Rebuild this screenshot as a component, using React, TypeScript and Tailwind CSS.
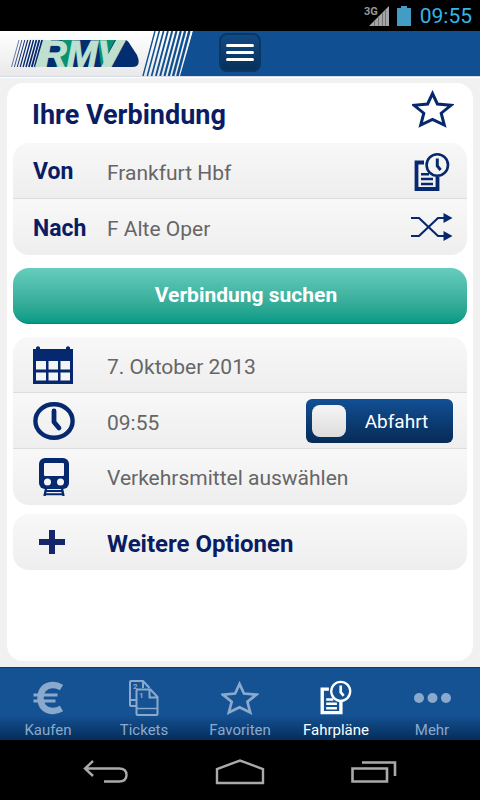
import { useState } from "react";
import type { ReactNode } from "react";

const NAVY = "#06286f";

function StarIcon({ className }: { className: string }) {
  return (
    <svg viewBox="0 0 42 38" className={className} fill="none" stroke="currentColor" strokeWidth="3" aria-hidden="true">
      <path d="M20.5 3.5 L25.4 14 L39 15.3 L29.2 23.2 L32.3 35 L20.5 29.3 L8.7 35 L11.8 23.2 L2 15.3 L15.6 14 Z" />
    </svg>
  );
}

function TimetableIcon({ className }: { className: string }) {
  return (
    <svg viewBox="0 0 36 39" className={className} fill="none" stroke="currentColor" aria-hidden="true">
      <path d="M10 9.5 H2.5 V36 H23.5 V24" strokeWidth="3.8" />
      <path d="M7 21.2 H15 M7 26 H19 M7 31 H19" strokeWidth="2.6" />
      <circle cx="23.3" cy="12" r="10.7" strokeWidth="2.6" />
      <path d="M23.3 5.5 V13 L26.6 17" strokeWidth="3" />
    </svg>
  );
}

function SwapIcon() {
  return (
    <svg viewBox="0 0 43 28" className="w-[43px] h-7" fill="none" stroke={NAVY} strokeWidth="2.2" aria-hidden="true">
      <path d="M1 5 H9 L28 23 H34 M1 23 H9 L28 5 H34" />
      <path d="M33.5 0 L42.5 5 L33.5 10 Z M33.5 18 L42.5 23 L33.5 28 Z" fill={NAVY} stroke="none" />
    </svg>
  );
}

function CalendarIcon() {
  return (
    <svg viewBox="0 0 40 38" className="w-10 h-[38px]" aria-hidden="true">
      <path d="M0 3 H3 V1.5 Q5 -1 7 1.5 V3 H33 V1.5 Q35 -1 37 1.5 V3 H40 V38 H0 Z" fill={NAVY} />
      <path
        d="M3 15 H13 V23.5 H3 Z M15.5 15 H25 V23.5 H15.5 Z M27.5 15 H37 V23.5 H27.5 Z M3 26.5 H13 V34.5 H3 Z M15.5 26.5 H25 V34.5 H15.5 Z M27.5 26.5 H37 V34.5 H27.5 Z"
        fill="#f5f5f5"
      />
    </svg>
  );
}

function ClockIcon() {
  return (
    <svg viewBox="0 0 42 38" className="w-[42px] h-[38px]" fill="none" stroke={NAVY} aria-hidden="true">
      <ellipse cx="21" cy="19" rx="18.6" ry="16.8" strokeWidth="4.4" />
      <path d="M21 9 V20 L26 26" strokeWidth="4.8" strokeLinecap="round" strokeLinejoin="round" />
    </svg>
  );
}

function TrainIcon() {
  return (
    <svg viewBox="0 0 32 38" className="w-8 h-[38px]" aria-hidden="true">
      <rect x="1" y="0" width="30" height="31" rx="6" fill={NAVY} />
      <rect x="6" y="5" width="20" height="13" rx="1" fill="#f5f5f5" />
      <circle cx="9.5" cy="24" r="3.5" fill="#f5f5f5" />
      <circle cx="22.5" cy="24" r="3.5" fill="#f5f5f5" />
      <path d="M8 31 L6.5 38 M24 31 L25.5 38" stroke={NAVY} strokeWidth="2.4" />
      <path d="M8 33 H24 M7 36.2 H25" stroke={NAVY} strokeWidth="2" />
    </svg>
  );
}

function EuroIcon() {
  return (
    <svg viewBox="0 0 30 34" className="w-[30px] h-[34px]" fill="none" stroke="currentColor" aria-hidden="true">
      <path d="M28.5 6.5 Q24 3.8 19.5 4 C11 4.4 7.5 10 7.5 17 C7.5 24 11 29.6 19.5 30 Q24 30.2 28.5 27.5" strokeWidth="6.4" />
      <path d="M0.5 14 H24.5 M0.5 20 H22.5" strokeWidth="3.2" />
    </svg>
  );
}

function TicketsIcon() {
  return (
    <svg viewBox="0 0 30 36" className="w-[30px] h-9" fill="none" stroke="currentColor" strokeWidth="2" aria-hidden="true">
      <path d="M8 26 H2 Q1 26 1 25 V2 Q1 1 2 1 H14 L20.5 8 M14 1 V8 M1 20 H7" />
      <path d="M8.5 9.5 H21.5 L28.5 17 V34 Q28.5 35 27.5 35 H8.5 Q7.5 35 7.5 34 V10.5 Q7.5 9.5 8.5 9.5 Z M20.5 9.5 V17.5 H28" />
      <path d="M7.5 28.5 H28.5" strokeWidth="1.4" />
      <text x="4" y="9" fontSize="8" fontWeight="bold" fontFamily="Roboto, sans-serif" fill="currentColor" stroke="none">2</text>
      <text x="10" y="18" fontSize="8" fontWeight="bold" fontFamily="Roboto, sans-serif" fill="currentColor" stroke="none">1</text>
    </svg>
  );
}

function Logo() {
  return (
    <svg viewBox="0 0 196 45" className="w-[196px] h-[45px] shrink-0" role="img" aria-label="RMV">
      <defs>
        <linearGradient id="logoBg" x1="0" y1="0" x2="0" y2="1">
          <stop offset="0" stopColor="#fff" />
          <stop offset="1" stopColor="#e9e9e9" />
        </linearGradient>
        <clipPath id="logoBody">
          <path d="M43 9 H125 Q127 9 128.5 11 L137 24 Q142 36 132 36 H35 Z" />
        </clipPath>
      </defs>
      <path d="M0 0 H193 L181 45 H0 Z" fill="url(#logoBg)" />
      {[0, 1, 2, 3, 4, 5, 6, 7, 8].map((i) => (
        <path key={i} d={`M${155 + i * 4.3} 0 L${143 + i * 4.3} 45`} stroke="#104f92" strokeWidth={1.4 + i * 0.15} />
      ))}
      <path d="M193 0 H196 V45 H180 Z" fill="#104f92" />
      {[0, 1, 2, 3, 4, 5, 6, 7, 8].map((i) => (
        <path key={i} d={`M${19 + i * 2.9} 9 L${11.5 + i * 2.9} 36`} stroke={NAVY} strokeWidth={0.6 + i * 0.18} />
      ))}
      <g clipPath="url(#logoBody)">
        <path d="M30 0 H150 V45 H30 Z" fill="#022d70" />
        <path d="M42 9 H51 L44 36 H34 Z" fill="#bfe0cf" />
        <path d="M62 9 H74 L68 36 H56 Z M98 9 H115 L101 36 Z" fill="#079273" />
        <text
          x="40"
          y="36"
          fontSize="37"
          fontFamily="'Liberation Sans', Arial, sans-serif"
          fontWeight="bold"
          fontStyle="italic"
          fill="#bfe0cf"
          stroke="#bfe0cf"
          strokeWidth="1"
        >
          RMV
        </text>
        <path d="M116 9 H126 L107 36 H101 Z" fill="#bfe0cf" />
      </g>
    </svg>
  );
}

function Row({ children, last }: { children: ReactNode; last?: boolean }) {
  return (
    <div
      className={`flex items-center h-14 pl-5 pr-[14px] bg-linear-to-b from-[#f8f8f8] to-[#eeeeee] ${
        last ? "" : "border-b border-[#dddddd]"
      }`}
    >
      {children}
    </div>
  );
}

const tabs = [
  { name: "Kaufen", icon: <EuroIcon /> },
  { name: "Tickets", icon: <TicketsIcon /> },
  { name: "Favoriten", icon: <StarIcon className="w-[38px] h-9" /> },
  { name: "Fahrpläne", icon: <TimetableIcon className="w-8 h-9" /> },
  {
    name: "Mehr",
    icon: (
      <svg viewBox="0 0 37 10" className="w-[37px] h-[10px]" fill="currentColor" aria-hidden="true">
        <circle cx="5" cy="5" r="5" />
        <circle cx="18.5" cy="5" r="5" />
        <circle cx="32" cy="5" r="5" />
      </svg>
    ),
  },
];

export default function App() {
  const [from, setFrom] = useState("Frankfurt Hbf");
  const [to, setTo] = useState("F Alte Oper");
  const [departure, setDeparture] = useState(true);
  const [activeTab, setActiveTab] = useState("Fahrpläne");

  const swap = () => {
    setFrom(to);
    setTo(from);
  };

  return (
    <div className="min-h-screen flex flex-col bg-[#f1f1f1] font-[Roboto,sans-serif]">
      {/* Status bar */}
      <div className="h-[31px] bg-black flex items-center justify-end pr-2 text-[#33b5e5]">
        <svg viewBox="0 0 26 22" className="w-[26px] h-[22px]" aria-hidden="true">
          <text x="0" y="10" fontSize="11" fontWeight="bold" fontFamily="Roboto, sans-serif" fill="#999">3G</text>
          <path d="M25 1 V21 H5 Z" fill="#a5a5a5" />
          <path d="M10.5 15 V21 M14.5 11 V21 M18.5 8 V21 M21.5 4 V21" stroke="#666" strokeWidth="0.8" />
        </svg>
        <svg viewBox="0 0 14 20" className="w-[14px] h-5 ml-[7px]" fill="#429cc3" aria-hidden="true">
          <path d="M0 2 H4 V0 H10 V2 H14 V20 H0 Z" />
        </svg>
        <span className="ml-[9px] text-[21px] leading-6">09:55</span>
      </div>

      {/* Header */}
      <header className="flex bg-[#104f92] border-b border-[#d5dce8] shadow-[0_1px_0_#fff]">
        <div className="flex-1 flex min-w-0">
          <Logo />
        </div>
        <button
          aria-label="Menü"
          className="mt-[2px] w-[42px] h-[39px] rounded-lg border-2 border-[#0b3763] bg-linear-to-b from-[#114a86] to-[#083059] flex flex-col items-center justify-center gap-1"
        >
          <span className="w-7 h-[3px] rounded-sm bg-white"></span>
          <span className="w-7 h-[3px] rounded-sm bg-white"></span>
          <span className="w-7 h-[3px] rounded-sm bg-white"></span>
        </button>
        <div className="flex-1"></div>
      </header>

      <main className="flex-1 mx-[7px] mt-[6px] mb-[6px] px-[6px] pb-6 bg-white rounded-2xl text-[21px] text-[#666666]">
        <div className="flex items-center justify-between h-[60px] pl-[19px] pr-[13px] text-[#0a1c63]">
          <h1 className="text-[27px] leading-8 font-bold pt-1">Ihre Verbindung</h1>
          <button aria-label="Als Favorit speichern" className="text-[#06286f] -mt-2">
            <StarIcon className="w-[42px] h-[38px]" />
          </button>
        </div>

        <div className="rounded-2xl overflow-hidden">
          <Row>
            <label htmlFor="from" className="w-[74px] shrink-0 pt-1 text-[23px] font-bold text-[#0a1c63]">
              Von
            </label>
            <input id="from" value={from} onChange={(e) => setFrom(e.target.value)} className="flex-1 min-w-0 pt-[6px] outline-none" />
            <button aria-label="Letzte Haltestellen" className="text-[#06286f] pt-[3px] mr-[3px]">
              <TimetableIcon className="w-9 h-[39px]" />
            </button>
          </Row>
          <Row last>
            <label htmlFor="to" className="w-[74px] shrink-0 pt-1 text-[23px] font-bold text-[#0a1c63]">
              Nach
            </label>
            <input id="to" value={to} onChange={(e) => setTo(e.target.value)} className="flex-1 min-w-0 pt-[6px] outline-none" />
            <button aria-label="Start und Ziel tauschen" onClick={swap}>
              <SwapIcon />
            </button>
          </Row>
        </div>

        <button className="w-full h-14 mt-[13px] rounded-2xl bg-linear-to-b from-[#66cdbd] to-[#009b86] border-b border-[#008a77] pl-3 text-white font-bold text-[21px]">
          Verbindung suchen
        </button>

        <div className="mt-[13px] rounded-2xl overflow-hidden">
          <Row>
            <label htmlFor="date" aria-label="Datum" className="w-[74px] shrink-0">
              <CalendarIcon />
            </label>
            <input id="date" defaultValue="7. Oktober 2013" className="flex-1 min-w-0 pt-[6px] outline-none" />
          </Row>
          <Row>
            <label htmlFor="time" aria-label="Uhrzeit" className="w-[74px] shrink-0">
              <ClockIcon />
            </label>
            <input id="time" defaultValue="09:55" className="flex-1 min-w-0 pt-[6px] outline-none" />
            <button
              role="switch"
              aria-checked={departure}
              onClick={() => setDeparture(!departure)}
              className={`w-[147px] h-11 px-[6px] rounded-md flex items-center bg-linear-to-b from-[#125095] to-[#062b57] text-white text-[19px] ${
                departure ? "" : "flex-row-reverse"
              }`}
            >
              <span className="w-[34px] h-8 rounded-lg bg-linear-to-b from-[#f5f5f5] to-[#dddddd]"></span>
              <span className="flex-1 pt-1">{departure ? "Abfahrt" : "Ankunft"}</span>
            </button>
          </Row>
          <Row last>
            <span className="w-[74px] shrink-0 pl-[5px]">
              <TrainIcon />
            </span>
            <button className="flex-1 text-left pt-1">Verkehrsmittel auswählen</button>
          </Row>
        </div>

        <div className="mt-[9px] rounded-2xl overflow-hidden">
          <Row last>
            <button className="flex-1 flex items-center text-left text-[24px] font-bold text-[#0a1c63]">
              <span className="w-[74px] pl-[6px]">
                <svg viewBox="0 0 26 24" className="w-[26px] h-6" stroke="#14256b" strokeWidth="6" aria-hidden="true">
                  <path d="M13 0 V24 M0 12 H26" />
                </svg>
              </span>
              <span className="pt-1">Weitere Optionen</span>
            </button>
          </Row>
        </div>
      </main>

      {/* Tab bar */}
      <nav className="h-[73px] flex border-t border-[#0d3b6d] bg-linear-to-b from-[#155294] from-65% to-[#052e5b]">
        {tabs.map((tab) => (
          <button
            key={tab.name}
            onClick={() => setActiveTab(tab.name)}
            className={`flex-1 min-w-0 flex flex-col items-center pt-3 ${
              activeTab === tab.name ? "text-white" : "text-[#8ba9cd]"
            }`}
          >
            <span className="h-9 flex items-center justify-center">{tab.icon}</span>
            <span className="mt-1 text-[15px] leading-5">{tab.name}</span>
          </button>
        ))}
      </nav>

      {/* System navigation */}
      <div className="h-[60px] bg-black flex items-center justify-between pt-1 px-[83px] text-[#aaaaaa]">
        <button aria-label="Zurück">
          <svg viewBox="0 0 46 24" className="w-[46px] h-6" fill="none" stroke="currentColor" strokeWidth="2.4" aria-hidden="true">
            <path d="M10 1 L2 8.5 L10 16 M2 8.5 H36 Q43.5 8.5 43.5 15 Q43.5 21.5 36 21.5 H21" />
          </svg>
        </button>
        <button aria-label="Startseite">
          <svg viewBox="0 0 50 26" className="w-[50px] h-[26px]" fill="none" stroke="currentColor" strokeWidth="2.4" aria-hidden="true">
            <path d="M2 24 V10 L25 1.5 L48 10 V24 Z" />
          </svg>
        </button>
        <button aria-label="Letzte Apps">
          <svg viewBox="0 0 46 24" className="w-[46px] h-6" fill="none" stroke="currentColor" strokeWidth="2.6" aria-hidden="true">
            <path d="M1.5 8.5 H36 V21.5 H1.5 Z M11 2.5 H44 V16" />
          </svg>
        </button>
      </div>
    </div>
  );
}
